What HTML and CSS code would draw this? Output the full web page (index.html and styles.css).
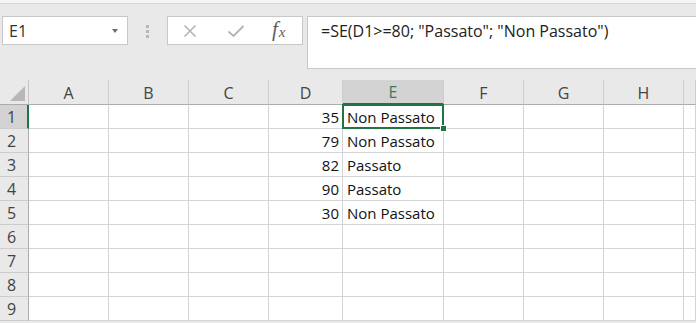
FILE: index.html
```html
<!DOCTYPE html>
<html lang="it">
<head>
  <meta charset="UTF-8">
  <title>Excel - SE</title>
  <link rel="stylesheet" href="styles.css">
</head>
<body>
  <div class="top-strip"></div>

  <div class="formula-row">
    <div class="name-box">
      <span>E1</span>
      <span class="caret"></span>
    </div>
    <div class="grip"><i></i><i></i><i></i></div>
    <div class="fn-box">
      <svg class="ico" width="14" height="14" viewBox="0 0 14 14"><path d="M1.5 1.5 L12.5 12.5 M12.5 1.5 L1.5 12.5" stroke="#b3b3b3" stroke-width="1.6" fill="none"/></svg>
      <svg class="ico" width="18" height="14" viewBox="0 0 18 14"><path d="M1.5 7.5 L6.5 12 L16.5 2" stroke="#b3b3b3" stroke-width="1.8" fill="none"/></svg>
      <span class="fx">f<sub>x</sub></span>
    </div>
    <div class="formula">=SE(D1&gt;=80; "Passato"; "Non Passato")</div>
  </div>

  <div class="sheet">
    <div class="corner"></div>
    <div class="colh">A</div>
    <div class="colh">B</div>
    <div class="colh">C</div>
    <div class="colh">D</div>
    <div class="colh sel">E</div>
    <div class="colh">F</div>
    <div class="colh">G</div>
    <div class="colh">H</div>
    <div class="colh"></div>

    <div class="rowh sel">1</div>
    <div class="c"></div><div class="c"></div><div class="c"></div>
    <div class="c num">35</div><div class="c active">Non Passato</div>
    <div class="c"></div><div class="c"></div><div class="c"></div><div class="c"></div>

    <div class="rowh">2</div>
    <div class="c"></div><div class="c"></div><div class="c"></div>
    <div class="c num">79</div><div class="c">Non Passato</div>
    <div class="c"></div><div class="c"></div><div class="c"></div><div class="c"></div>

    <div class="rowh">3</div>
    <div class="c"></div><div class="c"></div><div class="c"></div>
    <div class="c num">82</div><div class="c">Passato</div>
    <div class="c"></div><div class="c"></div><div class="c"></div><div class="c"></div>

    <div class="rowh">4</div>
    <div class="c"></div><div class="c"></div><div class="c"></div>
    <div class="c num">90</div><div class="c">Passato</div>
    <div class="c"></div><div class="c"></div><div class="c"></div><div class="c"></div>

    <div class="rowh">5</div>
    <div class="c"></div><div class="c"></div><div class="c"></div>
    <div class="c num">30</div><div class="c">Non Passato</div>
    <div class="c"></div><div class="c"></div><div class="c"></div><div class="c"></div>

    <div class="rowh">6</div>
    <div class="c"></div><div class="c"></div><div class="c"></div><div class="c"></div><div class="c"></div>
    <div class="c"></div><div class="c"></div><div class="c"></div><div class="c"></div>

    <div class="rowh">7</div>
    <div class="c"></div><div class="c"></div><div class="c"></div><div class="c"></div><div class="c"></div>
    <div class="c"></div><div class="c"></div><div class="c"></div><div class="c"></div>

    <div class="rowh">8</div>
    <div class="c"></div><div class="c"></div><div class="c"></div><div class="c"></div><div class="c"></div>
    <div class="c"></div><div class="c"></div><div class="c"></div><div class="c"></div>

    <div class="rowh">9</div>
    <div class="c"></div><div class="c"></div><div class="c"></div><div class="c"></div><div class="c"></div>
    <div class="c"></div><div class="c"></div><div class="c"></div><div class="c"></div>
  </div>
</body>
</html>
```

FILE: styles.css
```css
body {
  margin: 0;
  width: 696px;
  height: 323px;
  overflow: hidden;
  background: #e9e9e9;
  font-family: "Open Sans", "Noto Sans", sans-serif;
  color: #222;
}

.top-strip {
  height: 3px;
  background: #f4f4f4;
  border-bottom: 1px solid #d6d6d6;
}

.formula-row {
  display: flex;
  align-items: flex-start;
  padding: 12px 0 0 2px;
  height: 65px;
  box-sizing: border-box;
}

.name-box {
  width: 117px;
  height: 27px;
  background: #fff;
  border: 1px solid #c8c8c8;
  display: flex;
  align-items: center;
  justify-content: space-between;
  padding: 0 0 0 7px;
  box-sizing: content-box;
  font-size: 16px;
  color: #333;
  flex: none;
}
.name-box span:first-child { margin-left: -1px; }

.caret {
  width: 0;
  height: 0;
  border-left: 3.5px solid transparent;
  border-right: 3.5px solid transparent;
  border-top: 4px solid #6d6d6d;
  margin-right: 9px;
}

.grip {
  width: 39px;
  flex: none;
  display: flex;
  flex-direction: column;
  align-items: center;
  gap: 2px;
  padding-top: 9px;
}
.grip i {
  width: 3px;
  height: 3px;
  background: #b8b8b8;
}

.fn-box {
  width: 134px;
  height: 27px;
  flex: none;
  background: #fff;
  border: 1px solid #c8c8c8;
  display: flex;
  align-items: center;
  box-sizing: content-box;
}
.fn-box .ico { margin-left: 15px; }
.fn-box .ico + .ico { margin-left: 30px; }

.fx {
  margin-left: 27px;
  font-family: "Liberation Serif", serif;
  font-style: italic;
  font-size: 21px;
  color: #5e5e5e;
  line-height: 1;
  margin-top: -3px;
}
.fx sub {
  font-size: 15px;
  vertical-align: -1px;
  margin-left: 1px;
}

.formula {
  margin-left: 4px;
  flex: 1;
  height: 53px;
  background: #fff;
  border: 1px solid #c8c8c8;
  border-right: none;
  padding: 3px 0 0 13px;
  box-sizing: border-box;
  font-size: 16px;
  color: #222;
  white-space: nowrap;
}

.sheet {
  margin-top: 11px;
  display: grid;
  grid-template-columns: 29px 80px 80px 80px 74px 101px 80px 80px 80px 12px;
  grid-template-rows: 25px;
  grid-auto-rows: 24px;
  background: #fff;
}

.corner,
.colh,
.rowh {
  background: #e9e9e9;
  color: #444;
  font-size: 16px;
  display: flex;
  align-items: center;
  justify-content: center;
}

.corner {
  position: relative;
  border-right: 1px solid #c6c6c6;
  border-bottom: 1px solid #ababab;
}
.corner::after {
  content: "";
  position: absolute;
  right: 3px;
  bottom: 3px;
  border-left: 15px solid transparent;
  border-bottom: 15px solid #b7b7b7;
}

.colh {
  border-right: 1px solid #cdcdcd;
  border-bottom: 1px solid #ababab;
  padding-top: 1px;
  box-sizing: border-box;
}
.colh.sel {
  background: #d3d3d3;
  color: #3f7a5a;
  border-bottom: 2px solid #217346;
}

.rowh {
  border-right: 1px solid #ababab;
  border-bottom: 1px solid #cdcdcd;
  justify-content: flex-start;
  padding-left: 7px;
}
.rowh.sel {
  background: #d3d3d3;
  border-right: 2px solid #217346;
}

.c {
  border-right: 1px solid #d4d4d4;
  border-bottom: 1px solid #d4d4d4;
  font-size: 15px;
  color: #111;
  display: flex;
  align-items: center;
  padding: 0 3px 0 4px;
  white-space: nowrap;
  overflow: visible;
  min-width: 0;
}
.c.num { justify-content: flex-end; }

.c.active { position: relative; }
.c.active::before {
  content: "";
  position: absolute;
  left: -1px;
  top: -1px;
  right: -1px;
  bottom: -1px;
  border: 2px solid #217346;
}
.c.active::after {
  content: "";
  position: absolute;
  right: -4px;
  bottom: -4px;
  width: 5px;
  height: 5px;
  background: #217346;
  border: 1px solid #fff;
}
```
